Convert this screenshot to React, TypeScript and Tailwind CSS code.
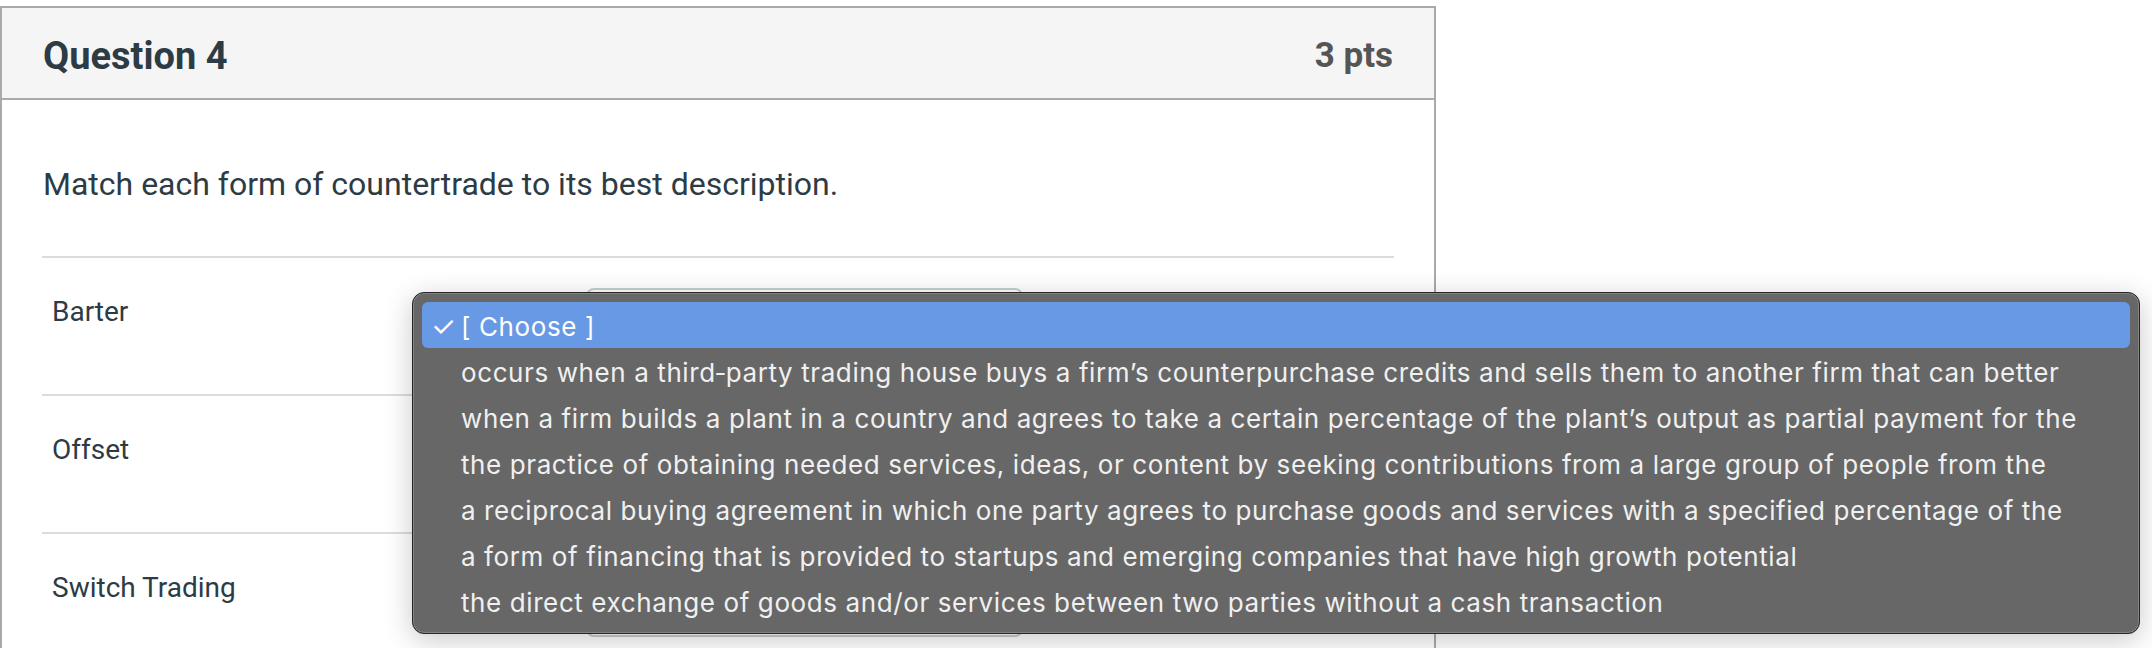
import React from "react";

const options = [
  "occurs when a third\u2011party trading house buys a firm\u2019s counterpurchase credits and sells them to another firm that can better",
  "when a firm builds a plant in a country and agrees to take a certain percentage of the plant\u2019s output as partial payment for the",
  "the practice of obtaining needed services, ideas, or content by seeking contributions from a large group of people from the",
  "a reciprocal buying agreement in which one party agrees to purchase goods and services with a specified percentage of the",
  "a form of financing that is provided to startups and emerging companies that have high growth potential",
  "the direct exchange of goods and/or services between two parties without a cash transaction",
];

const rows = ["Barter", "Offset", "Switch Trading"];

export default function App() {
  return (
    <div className="relative w-[2152px] h-[648px] bg-white overflow-hidden" style={{ fontFamily: "Roboto, 'Liberation Sans', sans-serif" }}>
      <div className="pt-[6px] w-[1436px]">
        <div className="border-2 border-[#a9a9a9]">
          <div className="h-[92px] bg-[#f5f5f5] border-b-2 border-[#a9a9a9] flex items-center justify-between pl-[41px] pr-[41px] pt-[5px]">
            <span className="text-[38px] font-bold text-[#2d3b45] leading-none">Question 4</span>
            <span className="text-[35px] font-bold text-[#555555] leading-none">3 pts</span>
          </div>
          <div className="px-[40px] pt-[60px]">
            <p className="text-[32px] leading-[48px] text-[#2d3b45] pl-[1px]">Match each form of countertrade to its best description.</p>
            <div className="mt-[48px]">
              {rows.map((r) => (
                <div key={r} className="border-t-2 border-[#dcdcdc] flex items-start pt-[30px] pb-[33px]">
                  <div className="w-[544px] pl-[10px] pt-[3px] text-[28px] leading-[42px] text-[#2d3b45]">{r}</div>
                  <div className="w-[437px] h-[73px] border-2 border-[#c8cdd1] rounded-[8px] bg-white"></div>
                </div>
              ))}
            </div>
          </div>
        </div>
      </div>

      <div
        className="absolute left-[412px] top-[292px] w-[1728px] h-[342px] rounded-[12px] bg-[#676767] border border-[#262626] p-[9px] shadow-[inset_0_0_0_1px_rgba(255,255,255,0.18),0_6px_28px_rgba(0,0,0,0.22)]"
        style={{ fontFamily: "Inter, 'Noto Sans', sans-serif" }}
      >
        <div className="h-[46px] flex items-center rounded-[6px] bg-[#6899e4] pl-[9px] pt-[2px] text-[26px] tracking-[0.6px] text-white">
          <span className="w-[30px] shrink-0 text-[28px] leading-none">✓</span>
          <span>[ Choose ]</span>
        </div>
        {options.map((o) => (
          <div key={o} className="h-[46px] flex items-center pl-[9px] pt-[2px] text-[26px] tracking-[0.6px] text-[#f0f0f0] whitespace-nowrap">
            <span className="w-[30px] shrink-0"></span>
            <span>{o}</span>
          </div>
        ))}
      </div>
    </div>
  );
}
